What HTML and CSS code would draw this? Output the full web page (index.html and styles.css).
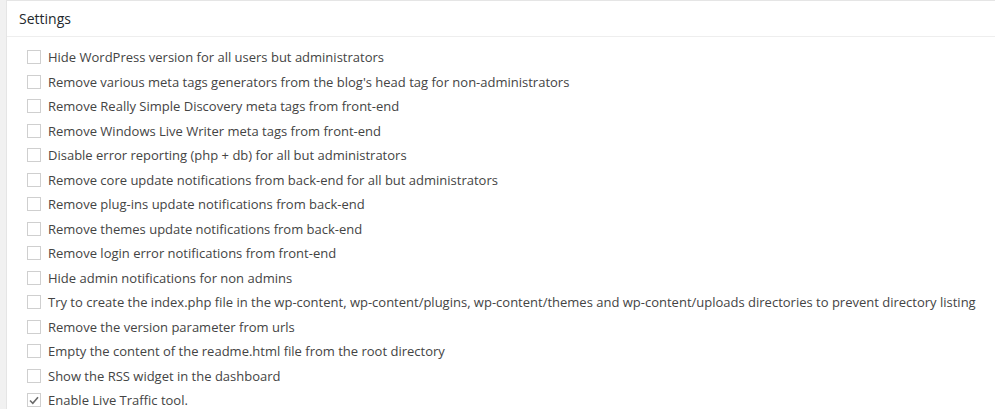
FILE: index.html
```html
<!DOCTYPE html>
<html lang="en">
	<head>
		<meta charset="utf-8" />
		<title>Settings</title>
		<link rel="stylesheet" href="styles.css">
	</head>
	<body>
		<div class="postbox">
			<h2 class="hndle">Settings</h2>
			<ul class="opcoes">
				<li><span class="caixa"></span>Hide WordPress version for all users but administrators</li>
				<li><span class="caixa"></span>Remove various meta tags generators from the blog's head tag for non-administrators</li>
				<li><span class="caixa"></span>Remove Really Simple Discovery meta tags from front-end</li>
				<li><span class="caixa"></span>Remove Windows Live Writer meta tags from front-end</li>
				<li><span class="caixa"></span>Disable error reporting (php + db) for all but administrators</li>
				<li><span class="caixa"></span>Remove core update notifications from back-end for all but administrators</li>
				<li><span class="caixa"></span>Remove plug-ins update notifications from back-end</li>
				<li><span class="caixa"></span>Remove themes update notifications from back-end</li>
				<li><span class="caixa"></span>Remove login error notifications from front-end</li>
				<li><span class="caixa"></span>Hide admin notifications for non admins</li>
				<li><span class="caixa"></span>Try to create the index.php file in the wp-content, wp-content/plugins, wp-content/themes and wp-content/uploads directories to prevent directory listing</li>
				<li><span class="caixa"></span>Remove the version parameter from urls</li>
				<li><span class="caixa"></span>Empty the content of the readme.html file from the root directory</li>
				<li><span class="caixa"></span>Show the RSS widget in the dashboard</li>
				<li><span class="caixa marcada"><svg width="10" height="9" viewBox="0 0 10 9"><path d="M1 4.5 L3.8 7.3 L9 1.2" fill="none" stroke="#6a6a6a" stroke-width="1.6"/></svg></span>Enable Live Traffic tool.</li>
			</ul>
		</div>
	</body>
</html>
```

FILE: styles.css
```css
html, body{height: 409px; overflow: hidden;}
body{margin: 0; background-color: #f1f1f1; font: 13px "Open Sans", "Liberation Sans", sans-serif; color: #444;}
.postbox{margin-left: 6px; width: 1020px; height: 409px; box-sizing: border-box; overflow: hidden; background-color: #fff; border: 1px solid #e5e5e5; border-right: none; border-bottom: none;}
.hndle{margin: 0; padding: 0 12px; height: 35px; line-height: 35px; font-size: 14px; font-weight: 400; color: #23282d; border-bottom: 1px solid #eee;}
.opcoes{list-style: none; margin: 0; padding: 8px 0 0 20px;}
.opcoes li{display: flex; align-items: center; height: 24.5px; white-space: nowrap;}
.caixa{display: flex; align-items: center; justify-content: center; width: 12px; height: 12px; border: 1px solid #cfcfcf; margin-right: 7px; box-sizing: content-box; flex-shrink: 0;}
```
